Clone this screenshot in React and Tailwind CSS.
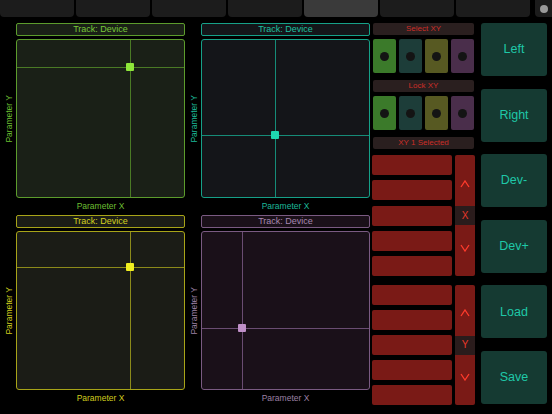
import React from 'react';

const PADS = [
    {
        key: 'green',
        label: 'border-[#5c9c2c] bg-[#1a2017] text-[#78c83a]',
        pad: 'border-[#5c9c2c] bg-[#1a2017]',
        axis: 'text-[#6cbf32]',
        line: 'bg-[#4a7a25]',
        dot: 'bg-[#8ee63a]',
        x: 113,
        y: 27,
    },
    {
        key: 'cyan',
        label: 'border-[#16a088] bg-[#141519] text-[#1ec0a0]',
        pad: 'border-[#16a088] bg-[#141519]',
        axis: 'text-[#1cb898]',
        line: 'bg-[#168c78]',
        dot: 'bg-[#1ed6b0]',
        x: 73,
        y: 95,
    },
    {
        key: 'yellow',
        label: 'border-[#a8a418] bg-[#1b1c16] text-[#d4d020]',
        pad: 'border-[#a8a418] bg-[#1b1c16]',
        axis: 'text-[#d0cc1e]',
        line: 'bg-[#8c8a1a]',
        dot: 'bg-[#f0ee20]',
        x: 113,
        y: 35,
    },
    {
        key: 'purple',
        label: 'border-[#7a5a82] bg-[#1a1019] text-[#a888b0]',
        pad: 'border-[#7a5a82] bg-[#1a1019]',
        axis: 'text-[#9c80a4]',
        line: 'bg-[#6a4c72]',
        dot: 'bg-[#c090c8]',
        x: 40,
        y: 96,
    },
];

const SWATCHES = ['bg-[#3b7a2a]', 'bg-[#1d3d39]', 'bg-[#575922]', 'bg-[#4a2e4b]'];

const XYPad = ({ theme }) => (
    <div className="flex flex-col w-[185px]">
        <div className={`ml-[16px] h-[13px] border rounded-[2px] flex items-center justify-center text-[9px] leading-none ${theme.label}`}>
            Track: Device
        </div>
        <div className="flex mt-[3px] h-[159px]">
            <div className="w-[16px] flex items-center justify-center pl-[3px]">
                <span className={`[writing-mode:vertical-rl] rotate-180 whitespace-nowrap text-[8.5px] leading-none ${theme.axis}`}>
                    Parameter Y
                </span>
            </div>
            <div className={`relative w-[169px] h-full border rounded-[3px] overflow-hidden ${theme.pad}`}>
                {/* crosshair */}
                <div className={`absolute top-0 bottom-0 w-px ${theme.line}`} style={{ left: theme.x }} />
                <div className={`absolute left-0 right-0 h-px ${theme.line}`} style={{ top: theme.y }} />
                <div
                    className={`absolute w-[8px] h-[8px] rounded-[1px] ${theme.dot}`}
                    style={{ left: theme.x - 4, top: theme.y - 4 }}
                />
            </div>
        </div>
        <div className={`ml-[16px] h-[17px] flex items-center justify-center text-[8.5px] leading-none ${theme.axis}`}>
            Parameter X
        </div>
    </div>
);

const RedLabel = ({ children, className = '' }) => (
    <div className={`h-[12px] rounded-[2px] bg-[#2a1f1f] text-[#cc2e28] text-[8px] leading-none flex items-center justify-center ${className}`}>
        {children}
    </div>
);

const Swatches = ({ className = '' }) => (
    <div className={`grid grid-cols-4 gap-[3px] h-[34px] ${className}`}>
        {SWATCHES.map((c) => (
            <div key={c} className={`rounded-[2px] flex items-center justify-center ${c}`}>
                <div className="w-[9px] h-[9px] rounded-full bg-[#141414]" />
            </div>
        ))}
    </div>
);

const Chevron = ({ down }) => (
    <svg width="10" height="8" viewBox="0 0 10 8">
        <polyline
            points={down ? '1,1 5,7 9,1' : '1,7 5,1 9,7'}
            fill="none"
            stroke="#ff3b2c"
            strokeWidth="1.3"
        />
    </svg>
);

const RedBlock = ({ axis, className = '' }) => (
    <div className={`flex gap-[3px] h-[120px] ${className}`}>
        <div className="w-[80px] flex flex-col justify-between">
            {[0, 1, 2, 3, 4].map((i) => (
                <div key={i} className="h-[20px] rounded-[2px] bg-[#7a1a16]" />
            ))}
        </div>
        <div className="w-[20px] flex flex-col rounded-[2px] bg-[#7a1a16] overflow-hidden">
            <div className="flex-1 flex items-center justify-center pt-[6px]">
                <Chevron />
            </div>
            <div className="h-[19px] bg-[#2a1c1c] flex items-center justify-center text-[#e8382a] text-[10px] leading-none">
                {axis}
            </div>
            <div className="flex-1 flex items-center justify-center pb-[6px]">
                <Chevron down />
            </div>
        </div>
    </div>
);

const NAV = ['Left', 'Right', 'Dev-', 'Dev+', 'Load', 'Save'];

export default function App() {
    return (
        <div className="w-[552px] h-[414px] bg-black overflow-hidden font-['Liberation_Sans',Arial,sans-serif]">
            {/* top tab strip */}
            <div className="flex gap-[2px] h-[17px]">
                {[0, 1, 2, 3, 4, 5, 6].map((i) => (
                    <div
                        key={i}
                        className={`w-[74px] h-full rounded-b-[4px] ${i === 4 ? 'bg-[#3a3a3a]' : 'bg-[#1c1c1c]'}`}
                    />
                ))}
                <div className="ml-[3px] w-[17px] h-full rounded-bl-[4px] bg-[#1c1c1c] flex items-center justify-center">
                    <div className="w-[8px] h-[8px] rounded-full bg-[#9a9a9a]" />
                </div>
            </div>

            <div className="flex pt-[6px]">
                {/* XY pads */}
                <div className="flex flex-col">
                    <XYPad theme={PADS[0]} />
                    <XYPad theme={PADS[2]} />
                </div>
                <div className="flex flex-col">
                    <XYPad theme={PADS[1]} />
                    <XYPad theme={PADS[3]} />
                </div>

                {/* selection column */}
                <div className="ml-[2px] w-[103px] flex flex-col">
                    <RedLabel className="ml-[1px] mr-[1px]">Select XY</RedLabel>
                    <Swatches className="mt-[4px] ml-[1px] mr-[1px]" />
                    <RedLabel className="mt-[7px] ml-[1px] mr-[1px]">Lock XY</RedLabel>
                    <Swatches className="mt-[4px] ml-[1px] mr-[1px]" />
                    <RedLabel className="mt-[7px] ml-[1px] mr-[1px]">XY 1 Selected</RedLabel>
                    <RedBlock axis="X" className="mt-[6px] h-[121px]" />
                    <RedBlock axis="Y" className="mt-[9px]" />
                </div>

                {/* navigation buttons */}
                <div className="ml-[6px] w-[66px] h-[381px] flex flex-col justify-between">
                    {NAV.map((n) => (
                        <div
                            key={n}
                            className="h-[53px] rounded-[3px] bg-[#153a32] text-[#1fc8a8] text-[12.5px] flex items-center justify-center"
                        >
                            {n}
                        </div>
                    ))}
                </div>
            </div>
        </div>
    );
}
